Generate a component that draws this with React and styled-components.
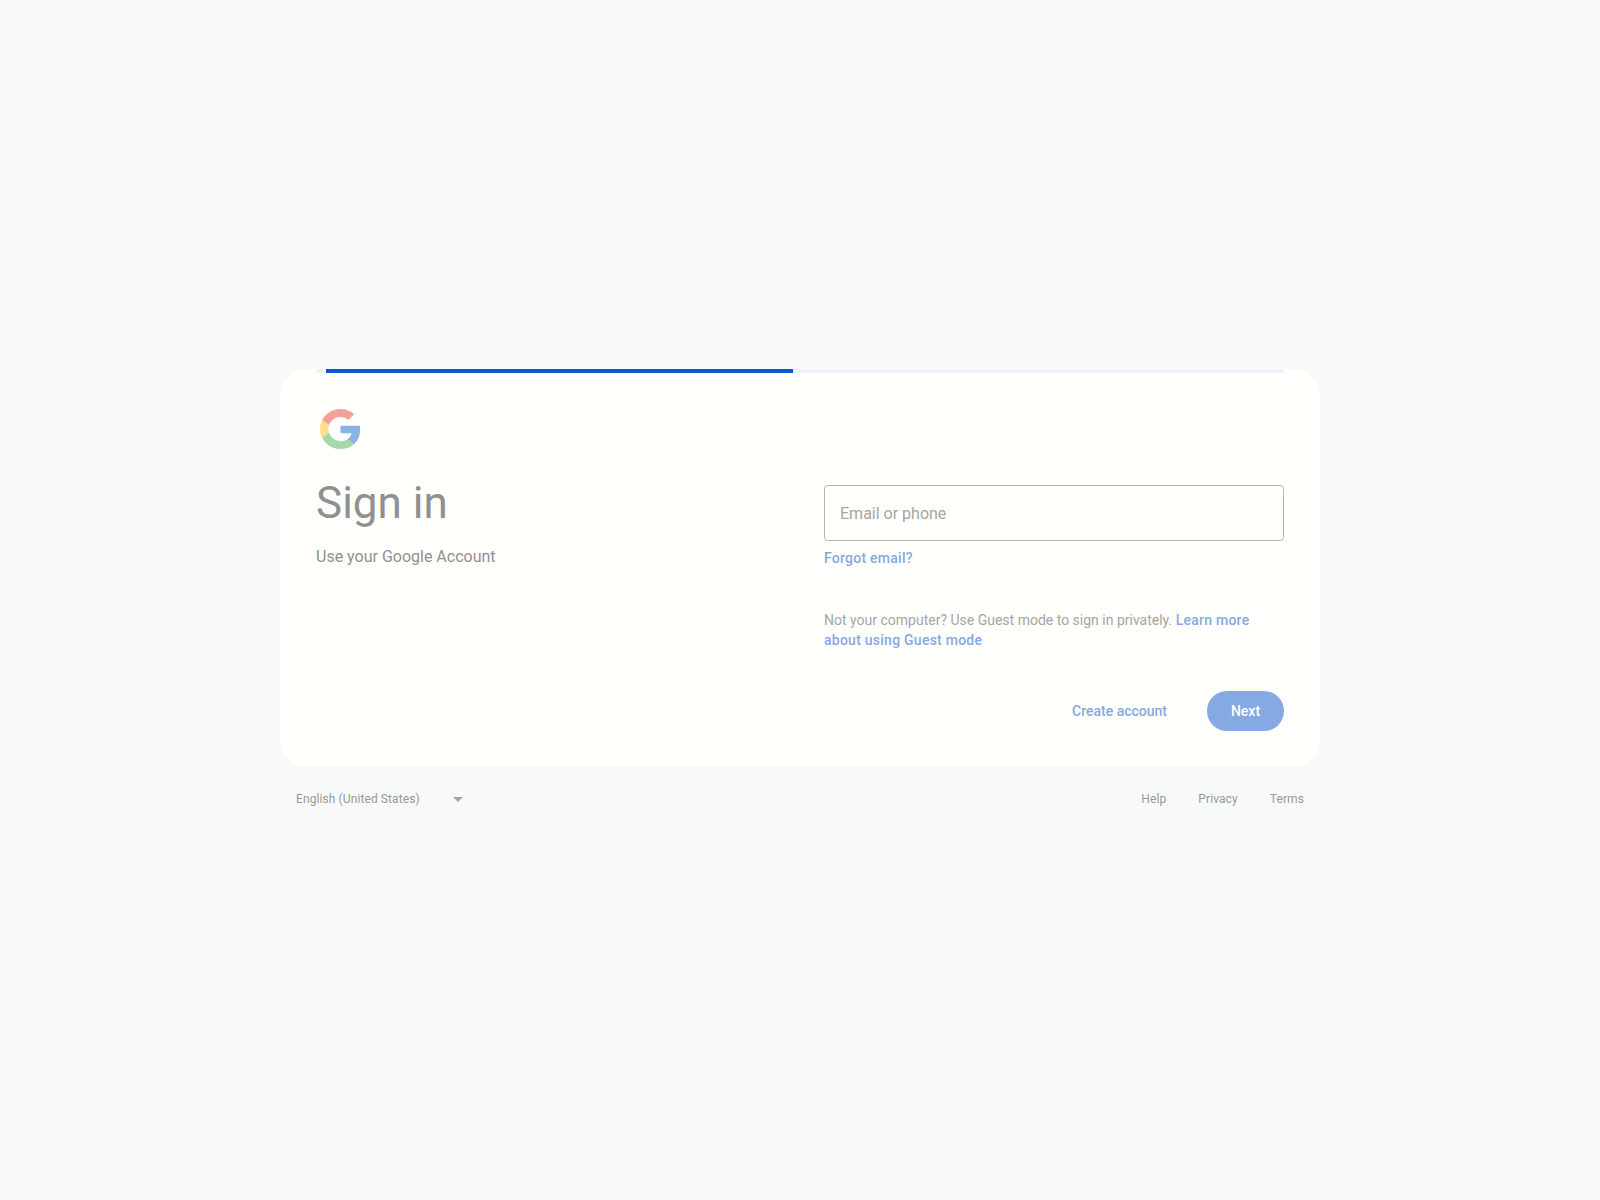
import React from 'react'
import styled, { createGlobalStyle } from 'styled-components'

const GlobalStyle = createGlobalStyle`
    html, body {
        margin: 0;
        padding: 0;
        background: #f8fafa;
        font-family: Roboto, "Liberation Sans", sans-serif;
    }
`
const Page = styled.div`
    min-height: 100vh;
    display: flex;
    flex-direction: column;
    align-items: center;
    justify-content: center;
`
const Wrapper = styled.div`
    width: 1040px;
`
const Card = styled.main`
    position: relative;
    box-sizing: border-box;
    height: 398px;
    padding: 40px 36px 36px;
    background: #fffffc;
    border-radius: 28px;
`
const ProgressTrack = styled.div`
    position: absolute;
    top: 0;
    left: 36px;
    right: 36px;
    height: 4px;
    background: #eef2fa;
`
const ProgressBar = styled.div`
    position: absolute;
    top: 0;
    left: 10px;
    width: 467px;
    height: 4px;
    background: #0b57d0;
`
const Logo = styled.svg`
    display: block;
    width: 41px;
    height: 40px;
    margin-left: 4px;
`
const Columns = styled.div`
    display: grid;
    grid-template-columns: 1fr 460px;
`
const Intro = styled.div`
    display: flex;
    flex-direction: column;
`
const Title = styled.h1`
    margin: 28px 0 0;
    font-size: 44px;
    line-height: 52px;
    font-weight: 400;
    color: #909090;
`
const Subtitle = styled.div`
    margin-top: 16px;
    font-size: 16px;
    line-height: 24px;
    color: #90908e;
`
const Form = styled.div`
    display: flex;
    flex-direction: column;
    padding-top: 36px;
`
const Field = styled.div`
    position: relative;
    box-sizing: border-box;
    height: 56px;
    border: 1px solid #b5b5b0;
    border-radius: 4px;
`
const FieldInput = styled.input`
    box-sizing: border-box;
    width: 100%;
    height: 100%;
    padding: 0 15px;
    border: 0;
    outline: 0;
    background: transparent;
    font: 400 16px Roboto, sans-serif;
`
const FieldLabel = styled.label`
    position: absolute;
    top: 17px;
    left: 15px;
    font-size: 16px;
    line-height: 22px;
    color: #a5a5a2;
`
const TextLink = styled.a`
    color: #85a9e2;
    font-weight: 500;
    font-size: 14px;
    line-height: 20px;
    letter-spacing: ${props => (props.$plain ? '0' : '0.25px')};
    cursor: pointer;
`
const ForgotRow = styled.div`
    margin-top: 7px;
    line-height: 20px;
    display: flex;
`
const Note = styled.p`
    margin: 42px 0 0;
    font-size: 14px;
    line-height: 20px;
    color: #a5a5a2;
`
const Actions = styled.div`
    display: flex;
    justify-content: flex-end;
    align-items: center;
    gap: 40px;
    margin-top: 41px;
`
const NextButton = styled.button`
    width: 77px;
    height: 40px;
    padding: 0;
    border: 0;
    border-radius: 20px;
    background: #85a9e2;
    color: #fffffc;
    font: 500 14px Roboto, sans-serif;
`
const Footer = styled.footer`
    box-sizing: border-box;
    height: 64px;
    padding: 0 16px;
    display: flex;
    justify-content: space-between;
    align-items: center;
    font-size: 12px;
    letter-spacing: 0.1px;
    color: #989898;
`
const Language = styled.div`
    display: flex;
    align-items: center;
    gap: 33px;
`
const Caret = styled.span`
    width: 0;
    height: 0;
    border-left: 5px solid transparent;
    border-right: 5px solid transparent;
    border-top: 5px solid #a3a3a3;
`
const FooterLinks = styled.nav`
    display: flex;
    gap: 32px;
`

const GoogleLogo = () => (
    <Logo viewBox="0 0 48 48" preserveAspectRatio="none">
        <path fill="#f5a19a" d="M24 9.5c3.54 0 6.71 1.22 9.21 3.6l6.85-6.85C35.9 2.38 30.47 0 24 0 14.62 0 6.51 5.38 2.56 13.22l7.98 6.19C12.43 13.72 17.74 9.5 24 9.5z" />
        <path fill="#8ab2e2" d="M46.98 24.55c0-1.57-.15-3.09-.38-4.55H24v9.02h12.94c-.58 2.96-2.26 5.48-4.78 7.18l7.73 6c4.51-4.18 7.09-10.36 7.09-17.65z" />
        <path fill="#fddc8e" d="M10.53 28.59c-.48-1.45-.76-2.99-.76-4.59s.27-3.14.76-4.59l-7.98-6.19C.92 16.46 0 20.12 0 24c0 3.88.92 7.54 2.56 10.78l7.97-6.19z" />
        <path fill="#a5d8a8" d="M24 48c6.48 0 11.93-2.13 15.89-5.81l-7.73-6c-2.15 1.45-4.92 2.3-8.16 2.3-6.26 0-11.57-4.22-13.47-9.91l-7.98 6.19C6.51 42.62 14.62 48 24 48z" />
    </Logo>
)

const App = () => {
    return (
        <Page>
            <GlobalStyle />
            <Wrapper>
                <Card>
                    <ProgressTrack>
                        <ProgressBar />
                    </ProgressTrack>
                    <GoogleLogo />
                    <Columns>
                        <Intro>
                            <Title>Sign in</Title>
                            <Subtitle>Use your Google Account</Subtitle>
                        </Intro>
                        <Form>
                            <Field>
                                <FieldInput id="identifier" type="text" />
                                <FieldLabel htmlFor="identifier">Email or phone</FieldLabel>
                            </Field>
                            <ForgotRow>
                                <TextLink>Forgot email?</TextLink>
                            </ForgotRow>
                            <Note>
                                Not your computer? Use Guest mode to sign in privately. <TextLink>Learn more about using Guest mode</TextLink>
                            </Note>
                            <Actions>
                                <TextLink $plain>Create account</TextLink>
                                <NextButton>Next</NextButton>
                            </Actions>
                        </Form>
                    </Columns>
                </Card>
                <Footer>
                    <Language>
                        English (United States)
                        <Caret />
                    </Language>
                    <FooterLinks>
                        <span>Help</span>
                        <span>Privacy</span>
                        <span>Terms</span>
                    </FooterLinks>
                </Footer>
            </Wrapper>
        </Page>
    )
}

export default App
